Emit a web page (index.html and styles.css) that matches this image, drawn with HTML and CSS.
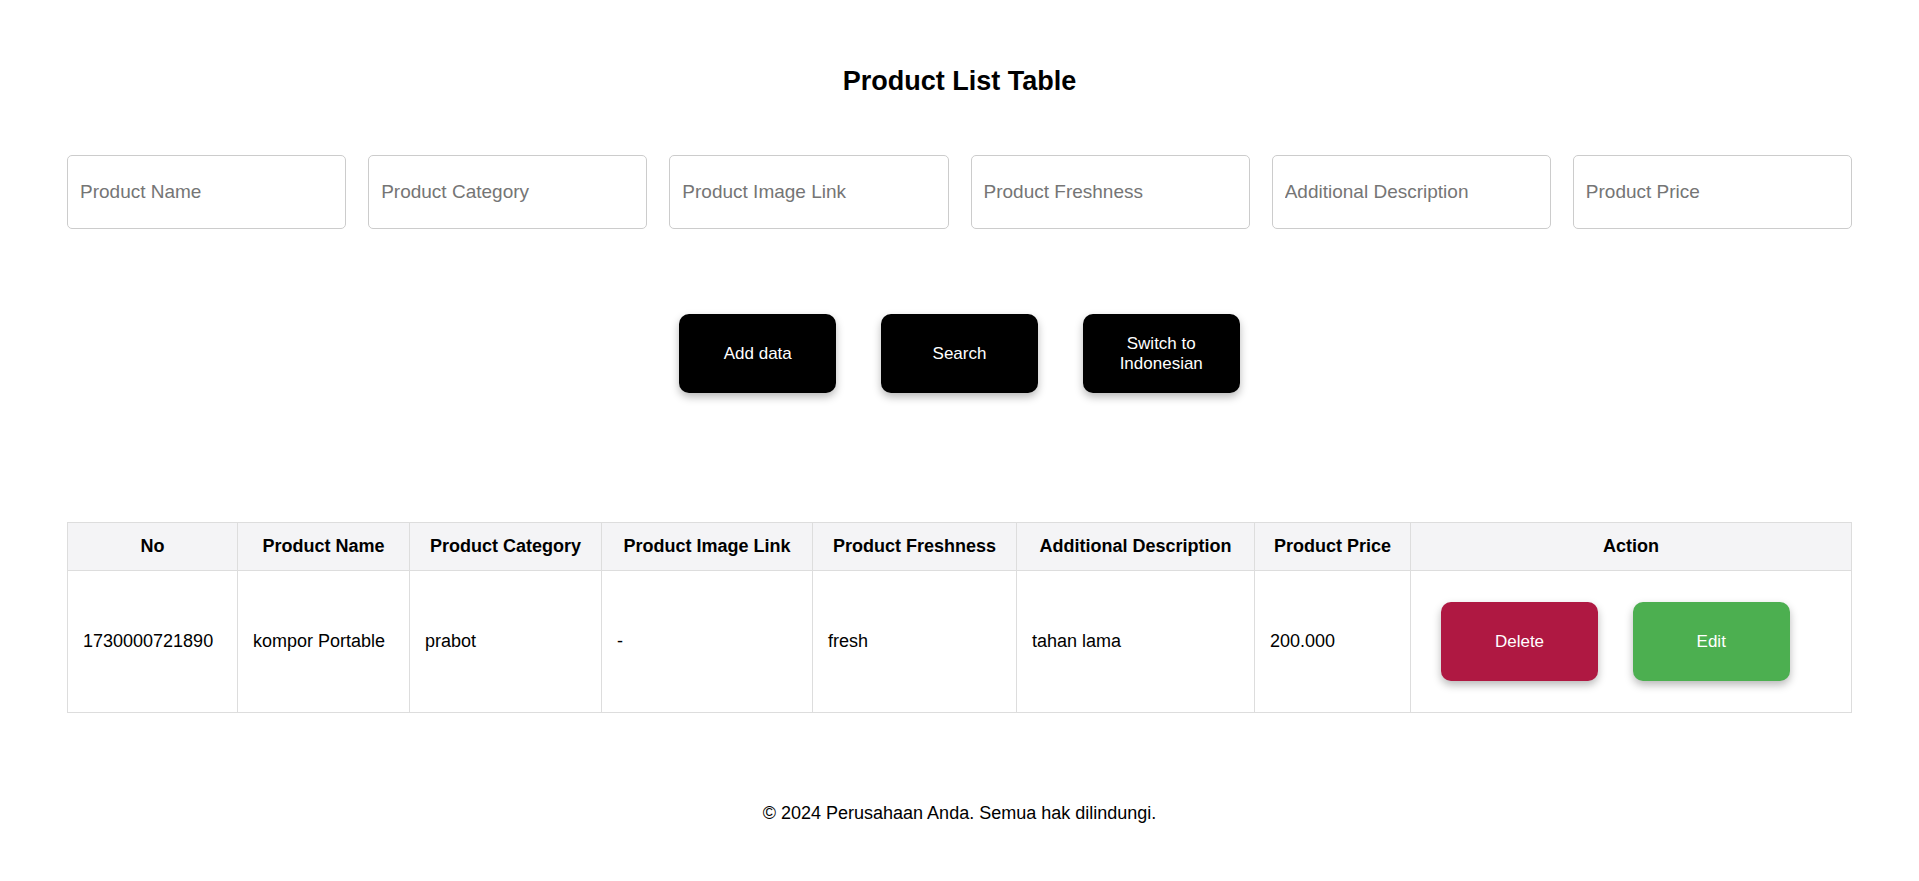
FILE: index.html
```html
<!DOCTYPE html>
<html lang="en">
<head>
<meta charset="UTF-8">
<title>Product List Table</title>
<link rel="stylesheet" href="styles.css">
</head>
<body>
<div class="page">
  <h1 class="title">Product List Table</h1>

  <div class="form">
    <input class="field" type="text" placeholder="Product Name">
    <input class="field" type="text" placeholder="Product Category">
    <input class="field" type="text" placeholder="Product Image Link">
    <input class="field" type="text" placeholder="Product Freshness">
    <input class="field" type="text" placeholder="Additional Description">
    <input class="field" type="text" placeholder="Product Price">
  </div>

  <div class="actions">
    <button class="btn btn-dark">Add data</button>
    <button class="btn btn-dark">Search</button>
    <button class="btn btn-dark">Switch to Indonesian</button>
  </div>

  <table class="products">
    <colgroup>
      <col class="c-no">
      <col class="c-name">
      <col class="c-cat">
      <col class="c-img">
      <col class="c-fresh">
      <col class="c-desc">
      <col class="c-price">
      <col class="c-action">
    </colgroup>
    <thead>
      <tr>
        <th>No</th>
        <th>Product Name</th>
        <th>Product Category</th>
        <th>Product Image Link</th>
        <th>Product Freshness</th>
        <th>Additional Description</th>
        <th>Product Price</th>
        <th>Action</th>
      </tr>
    </thead>
    <tbody>
      <tr>
        <td>1730000721890</td>
        <td>kompor Portable</td>
        <td>prabot</td>
        <td>-</td>
        <td>fresh</td>
        <td>tahan lama</td>
        <td>200.000</td>
        <td class="action-cell"><button class="btn btn-delete">Delete</button> <button class="btn btn-edit">Edit</button></td>
      </tr>
    </tbody>
  </table>

  <footer class="footer">© 2024 Perusahaan Anda. Semua hak dilindungi.</footer>
</div>
</body>
</html>
```

FILE: styles.css
```css
* {
  box-sizing: border-box;
}

body {
  margin: 0;
  background: #ffffff;
  color: #000000;
  font-family: "Liberation Sans", Arial, sans-serif;
  font-size: 18px;
}

.page {
  padding: 0 67px;
}

.title {
  margin: 0;
  padding-top: 66px;
  font-size: 27px;
  line-height: 30px;
  font-weight: bold;
  text-align: center;
}

.form {
  display: flex;
  gap: 22px;
  margin-top: 59px;
}

.field {
  flex: 1 1 0;
  min-width: 0;
  height: 74px;
  padding: 0 12px;
  border: 1px solid #cccccc;
  border-radius: 5px;
  font-family: "Liberation Sans", Arial, sans-serif;
  font-size: 19px;
  color: #000000;
  background: #ffffff;
}

.field::placeholder {
  color: #757575;
}

.actions {
  margin-top: 85px;
  text-align: center;
  font-size: 17px;
}

.btn {
  display: inline-block;
  vertical-align: middle;
  width: 157px;
  height: 79px;
  padding: 0 20px;
  border: none;
  border-radius: 10px;
  font-family: "Liberation Sans", Arial, sans-serif;
  font-size: 17px;
  line-height: 20px;
  color: #ffffff;
  box-shadow: 0 4px 8px rgba(0, 0, 0, 0.28);
  cursor: pointer;
}

.actions .btn {
  margin: 0 20px;
}

.btn-dark {
  background: #000000;
}

.btn-delete {
  background: #af1842;
  margin: 15px;
}

.btn-edit {
  background: #4caf50;
  margin: 15px;
}

.products {
  width: 100%;
  margin-top: 129px;
  border-collapse: collapse;
  table-layout: fixed;
}

.c-no { width: 170px; }
.c-name { width: 172px; }
.c-cat { width: 192px; }
.c-img { width: 211px; }
.c-fresh { width: 204px; }
.c-desc { width: 238px; }
.c-price { width: 156px; }
.c-action { width: auto; }

.products th,
.products td {
  border: 1px solid #dddddd;
  font-size: 18px;
  line-height: 21px;
}

.products th {
  padding: 13px 15px;
  background: #f4f4f6;
  font-weight: bold;
  text-align: center;
}

.products td {
  padding: 16px 15px;
  text-align: left;
  vertical-align: middle;
}

.products td.action-cell {
  padding: 16px 15px;
  font-size: 17px;
  white-space: nowrap;
}

.footer {
  margin-top: 90px;
  text-align: center;
  font-size: 18px;
  line-height: 21px;
}
```
